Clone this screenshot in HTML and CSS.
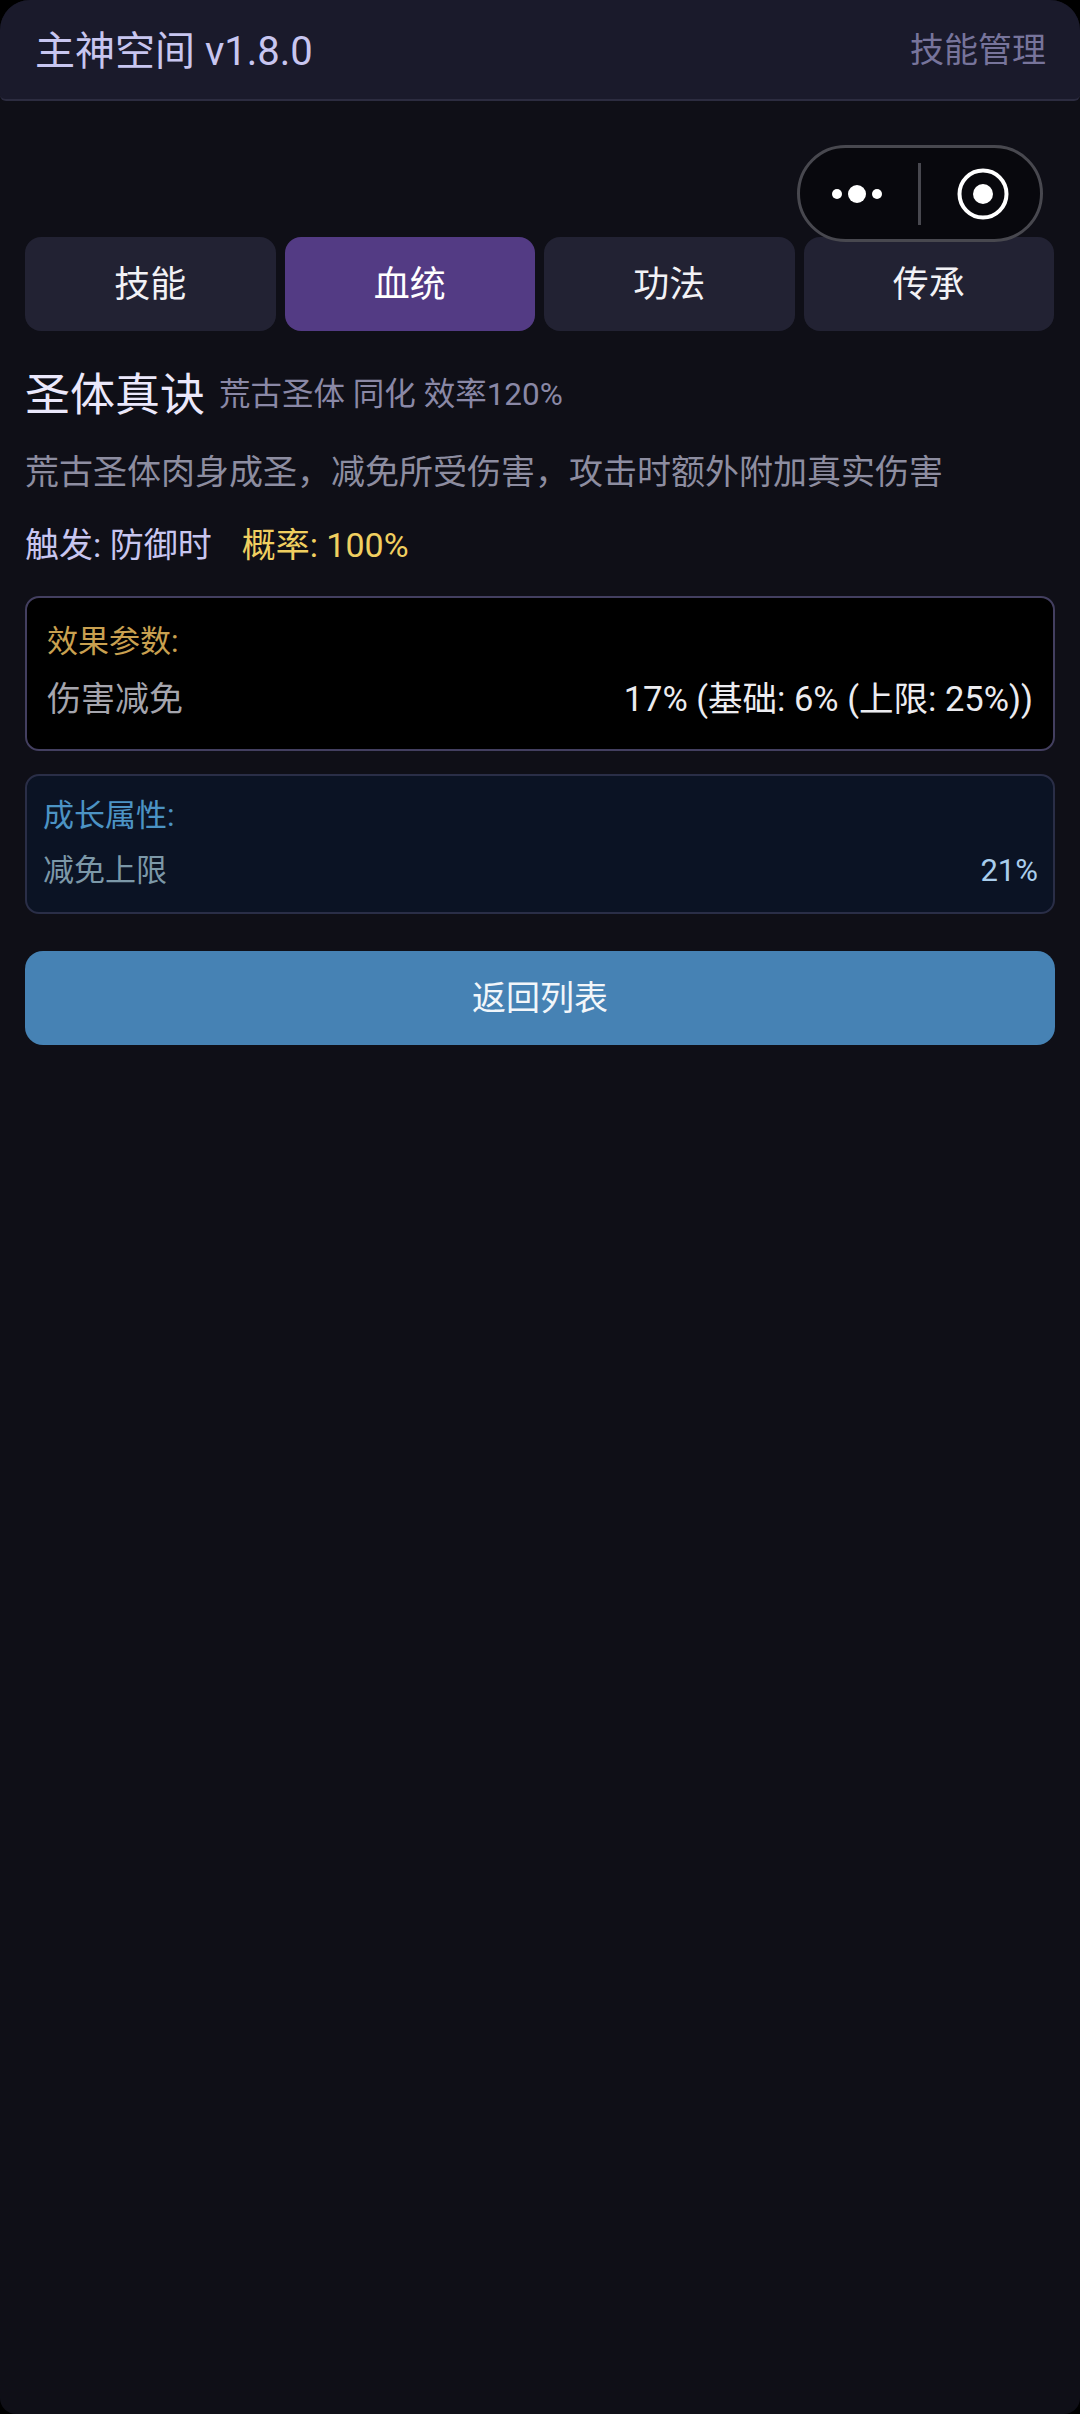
FILE: index.html
```html
<!DOCTYPE html>
<html lang="zh-CN">
<head>
<meta charset="utf-8">
<title>主神空间</title>
<link rel="stylesheet" href="styles.css">
</head>
<body>
<div class="app">
  <header class="topbar">
    <span class="topbar-title">主神空间 v1.8.0</span>
    <span class="topbar-sub">技能管理</span>
  </header>

  <div class="capsule">
    <svg class="capsule-dots" width="50" height="18" viewBox="0 0 50 18"><circle cx="5" cy="9" r="5" fill="#fff"/><circle cx="25" cy="9" r="9" fill="#fff"/><circle cx="45" cy="9" r="5" fill="#fff"/></svg>
    <span class="capsule-line"></span>
    <svg class="capsule-target" width="52" height="52" viewBox="0 0 52 52"><circle cx="26" cy="26" r="23.5" fill="none" stroke="#fff" stroke-width="4"/><circle cx="26" cy="26" r="10" fill="#fff"/></svg>
  </div>

  <main class="content">
    <nav class="tabs">
      <div class="tab">技能</div>
      <div class="tab tab-active">血统</div>
      <div class="tab">功法</div>
      <div class="tab">传承</div>
    </nav>

    <div class="skill-head">
      <span class="skill-name">圣体真诀</span>
      <span class="skill-meta">荒古圣体 同化 效率120%</span>
    </div>
    <p class="skill-desc">荒古圣体肉身成圣，减免所受伤害，攻击时额外附加真实伤害</p>
    <div class="skill-trigger">
      <span class="trigger-on">触发: 防御时</span>
      <span class="trigger-rate">概率: 100%</span>
    </div>

    <section class="panel panel-effect">
      <div class="effect-title">效果参数:</div>
      <div class="row">
        <span class="effect-key">伤害减免</span>
        <span class="effect-val">17% (基础: 6% (上限: 25%))</span>
      </div>
    </section>

    <section class="panel panel-growth">
      <div class="growth-title">成长属性:</div>
      <div class="row">
        <span class="growth-key">减免上限</span>
        <span class="growth-val">21%</span>
      </div>
    </section>

    <div class="back-btn">返回列表</div>
  </main>
</div>
</body>
</html>
```
FILE: styles.css
```css
* { box-sizing: border-box; }
html, body { margin: 0; padding: 0; background: #000; }
body {
  font-family: "Roboto", "Noto Sans CJK SC", sans-serif;
  font-weight: 400;
}
.app {
  position: relative;
  width: 1080px;
  height: 2414px;
  overflow: hidden;
  background: #0f0f17;
  border-radius: 30px 30px 16px 16px;
}

.topbar {
  height: 101px;
  padding: 0 34px 4px 35px;
  display: flex;
  align-items: center;
  justify-content: space-between;
  background: #1a1a2b;
  border-bottom: 2px solid #2c2c40;
  border-radius: 0 0 6px 6px;
}
.topbar-title { font-size: 40px; color: #c8c6f0; }
.topbar-sub { font-size: 34px; color: #77749b; }

.capsule {
  position: absolute;
  left: 797px;
  top: 145px;
  width: 246px;
  height: 97px;
  display: flex;
  align-items: center;
  background: #08080d;
  border: 3px solid #48484f;
  border-radius: 49px;
}
.capsule-dots { position: absolute; left: 32px; top: 37px; }
.capsule-line { position: absolute; left: 118px; top: 15px; width: 3px; height: 62px; background: #48484f; }
.capsule-target { position: absolute; left: 157px; top: 20px; }

.content { padding: 136px 25px 0; }

.tabs { display: grid; grid-template-columns: repeat(4, 1fr); column-gap: 9px; margin-right: 1px; }
.tab {
  height: 94px;
  padding-bottom: 6px;
  display: flex;
  align-items: center;
  justify-content: center;
  background: #222233;
  border-radius: 16px;
  font-size: 36px;
  color: #f2f2f6;
}
.tab-active { background: #533b84; color: #fff; }

.skill-head { display: flex; align-items: center; gap: 14px; margin-top: 28px; height: 64px; }
.skill-name { font-size: 45px; color: #ebe8fb; }
.skill-meta { font-size: 31.5px; color: #8a88a6; }
.skill-desc { margin: 25px 0 0; font-size: 34px; line-height: 48px; color: #8d8da0; }
.skill-trigger { display: flex; gap: 30px; margin-top: 25px; font-size: 34px; line-height: 48px; }
.trigger-on { color: #c8c6f0; }
.trigger-rate { color: #f0cf60; }

.panel { width: 1030px; display: flex; flex-direction: column; border-radius: 14px; }
.row { display: flex; justify-content: space-between; }

.panel-effect {
  margin-top: 27px;
  height: 155px;
  padding: 22px 20px 0 20px;
  background: #000;
  border: 2px solid #433f60;
}
.effect-title { font-size: 31px; line-height: 44px; color: #c9a050; }
.panel-effect .row { margin-top: 11px; line-height: 48px; }
.effect-key { font-size: 34px; color: #a5a5ad; }
.effect-val { font-size: 34.5px; color: #ececf0; }

.panel-growth {
  margin-top: 23px;
  height: 140px;
  padding: 18px 15px 0 16px;
  background: #0b1324;
  border: 2px solid #2a2e47;
}
.growth-title { font-size: 31px; line-height: 44px; color: #4c93c4; }
.panel-growth .row { margin-top: 11px; line-height: 44px; }
.growth-key { font-size: 31px; color: #7c98a8; }
.growth-val { font-size: 31px; color: #a9cdec; }

.back-btn {
  margin-top: 37px;
  height: 94px;
  padding-bottom: 5px;
  display: flex;
  align-items: center;
  justify-content: center;
  background: #4682b4;
  border-radius: 18px;
  font-size: 34px;
  color: #f2f6fa;
}
```
